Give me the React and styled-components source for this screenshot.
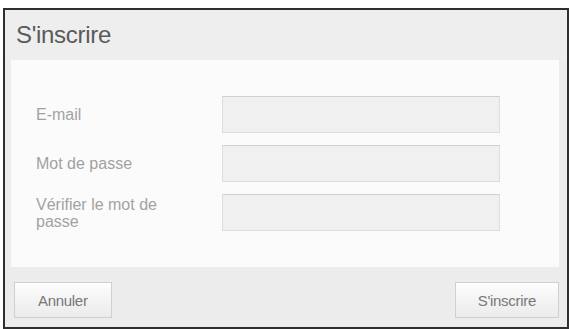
import React from "react";
import styled, { createGlobalStyle } from "styled-components";

const Global = createGlobalStyle`
  html, body { margin: 0; padding: 0; background: #ffffff; }
  body { font-family: "Liberation Sans", Arial, sans-serif; }
  * { box-sizing: border-box; }
`;

const Page = styled.div`
  width: 570px;
  height: 329px;
  padding: 8px 2px 0 3px;
  overflow: hidden;
`;

const Dialog = styled.div`
  width: 566px;
  height: 321px;
  border: 2px solid #2e2e2e;
  background: #ececec;
  display: flex;
  flex-direction: column;
`;

const Header = styled.div`
  height: 50px;
  display: flex;
  align-items: center;
  padding-left: 11px;
  background: #eeeeee;
`;

const Title = styled.h1`
  margin: 0;
  font-size: 24px;
  font-weight: normal;
  color: #5a5a5a;
  letter-spacing: -0.3px;
`;

const Body = styled.div`
  height: 207px;
  margin: 0 8px 0 6px;
  background: #fbfbfb;
  padding: 36px 0 0 25px;
  display: flex;
  flex-direction: column;
  gap: 12px;
`;

const Row = styled.div`
  display: flex;
  align-items: center;
  gap: 36px;
`;

const Label = styled.label`
  width: 150px;
  font-size: 16px;
  line-height: 17px;
  color: #a2a2a2;
`;

const Input = styled.input`
  width: 278px;
  height: 37px;
  border: 1px solid #dddddd;
  border-top-color: #d0d0d0;
  background: #f0f0f0;
  outline: none;
  margin: 0;
  padding: 0 8px;
`;

const Footer = styled.div`
  flex: 1;
  display: flex;
  justify-content: space-between;
  align-items: flex-start;
  padding: 15px 8px 0 9px;
  background: #ececec;
`;

const Button = styled.button`
  height: 36px;
  padding: 0 ${(p) => p.$pad}px;
  border: 1px solid #d0d0d0;
  background: linear-gradient(#fdfdfd, #ebebeb);
  color: #777777;
  font-family: "Liberation Sans", Arial, sans-serif;
  font-size: 15px;
  letter-spacing: -0.3px;
  cursor: pointer;
`;

export default function App() {
  return (
    <>
      <Global />
      <Page>
        <Dialog>
          <Header>
            <Title>S'inscrire</Title>
          </Header>
          <Body>
            <Row>
              <Label>E-mail</Label>
              <Input type="email" />
            </Row>
            <Row>
              <Label>Mot de passe</Label>
              <Input type="password" />
            </Row>
            <Row>
              <Label>Vérifier le mot de passe</Label>
              <Input type="password" />
            </Row>
          </Body>
          <Footer>
            <Button $pad={23}>Annuler</Button>
            <Button $pad={22}>S'inscrire</Button>
          </Footer>
        </Dialog>
      </Page>
    </>
  );
}
